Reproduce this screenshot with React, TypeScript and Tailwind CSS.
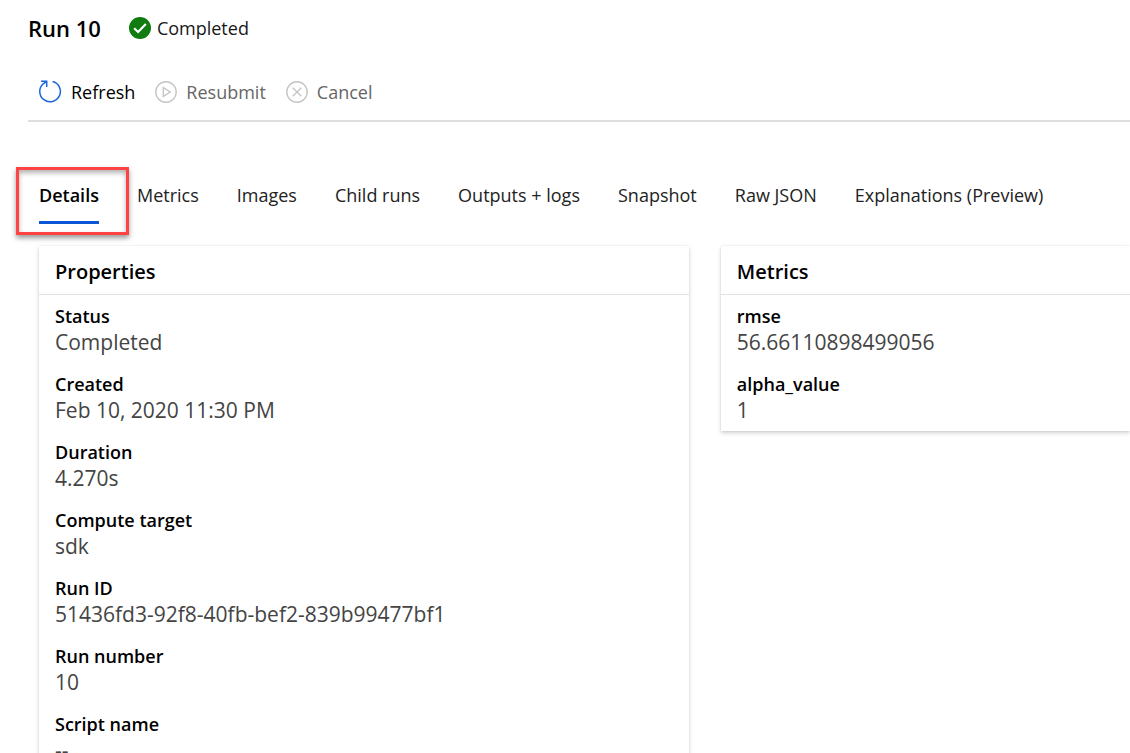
import { useState } from 'react';

const tabs = [
  'Details',
  'Metrics',
  'Images',
  'Child runs',
  'Outputs + logs',
  'Snapshot',
  'Raw JSON',
  'Explanations (Preview)',
];

const properties = [
  { label: 'Status', value: 'Completed' },
  { label: 'Created', value: 'Feb 10, 2020 11:30 PM' },
  { label: 'Duration', value: '4.270s' },
  { label: 'Compute target', value: 'sdk' },
  { label: 'Run ID', value: '51436fd3-92f8-40fb-bef2-839b99477bf1' },
  { label: 'Run number', value: '10' },
  { label: 'Script name', value: '--' },
];

const metrics = [
  { label: 'rmse', value: '56.66110898499056' },
  { label: 'alpha_value', value: '1' },
];

function CompletedIcon() {
  return (
    <svg className="size-[22px] shrink-0" viewBox="0 0 22 22" aria-hidden="true">
      <circle cx="11" cy="11" r="11" fill="#107c10" />
      <path d="M5.2 11.2 9.1 15 16.8 7" fill="none" stroke="#fff" strokeWidth="2.2" />
    </svg>
  );
}

function RefreshIcon() {
  return (
    <svg className="size-6 shrink-0" viewBox="0 0 24 24" fill="none" stroke="#1a66e0" strokeWidth="1.5" aria-hidden="true">
      <path d="M14.6 1.5A10.3 10.3 0 1 1 5.2 3.8L8.7 1.3" />
      <path d="M3 1.3H8.7V7" />
    </svg>
  );
}

function ResubmitIcon() {
  return (
    <svg className="size-[22px] shrink-0" viewBox="0 0 22 22" fill="none" stroke="#c8c6c4" strokeWidth="1.4" aria-hidden="true">
      <circle cx="11" cy="11" r="10.2" />
      <path d="M8.3 6.6V15.4L15.2 11Z" />
    </svg>
  );
}

function CancelIcon() {
  return (
    <svg className="size-[22px] shrink-0" viewBox="0 0 22 22" fill="none" stroke="#c8c6c4" strokeWidth="1.4" aria-hidden="true">
      <circle cx="11" cy="11" r="10.2" />
      <path d="M6.7 6.7 15.3 15.3M15.3 6.7 6.7 15.3" />
    </svg>
  );
}

function Card({ title, items }: { title: string; items: { label: string; value: string }[] }) {
  return (
    <section className="bg-white shadow-[0_2px_4px_rgba(0,0,0,0.18),0_0_2px_rgba(0,0,0,0.08)]">
      <h2 className="border-b border-[#e1e1e1] px-4 pt-[10px] pb-[6px] text-xl leading-8 font-semibold">{title}</h2>
      <dl className="flex flex-col gap-4 px-4 pt-2 pb-2">
        {items.map((item) => (
          <div key={item.label}>
            <dt className="text-lg leading-[26px] font-semibold">{item.label}</dt>
            <dd className="text-[21px] leading-[26px] text-[#444]">{item.value}</dd>
          </div>
        ))}
      </dl>
    </section>
  );
}

export default function App() {
  const [active, setActive] = useState('Details');

  return (
    <main className="h-screen overflow-hidden bg-white font-['Open_Sans','Noto_Sans',sans-serif] text-black">
      <header className="ml-7 border-b-2 border-[#dedede] pt-3">
        <div className="flex items-center gap-7">
          <h1 className="text-[22px] leading-8 font-semibold">Run 10</h1>
          <p className="flex items-center gap-[6px] text-lg leading-8 text-[#171717]">
            <CompletedIcon />
            Completed
          </p>
        </div>
        <div className="flex gap-5 pt-8 pb-3 pl-[10px] text-lg leading-8">
          <button type="button" className="flex items-center gap-[9px]">
            <RefreshIcon />
            Refresh
          </button>
          <button type="button" disabled className="flex items-center gap-[9px] text-[#666]">
            <ResubmitIcon />
            Resubmit
          </button>
          <button type="button" disabled className="flex items-center gap-[9px] text-[#666]">
            <CancelIcon />
            Cancel
          </button>
        </div>
      </header>

      <div role="tablist" className="mt-[57px] flex gap-[38px] pl-[39px] text-lg leading-8 whitespace-nowrap text-[#222]">
        {tabs.map((tab) => (
          <button
            key={tab}
            type="button"
            role="tab"
            aria-selected={tab === active}
            onClick={() => setActive(tab)}
            className={
              tab === active
                ? 'relative border-b-3 border-[#0b55d9] pb-[10px] font-semibold text-black'
                : 'relative border-b-3 border-transparent pb-[10px]'
            }
          >
            {tab}
            {tab === 'Details' && (
              <span className="pointer-events-none absolute -top-3 -right-[30px] -bottom-[14px] -left-[23px] border-3 border-[#ff4343] shadow-[0_3px_5px_rgba(0,0,0,0.4),inset_0_3px_5px_rgba(0,0,0,0.3)]" />
            )}
          </button>
        ))}
      </div>

      <div className="mt-[22px] grid grid-cols-[27fr_17fr] items-start gap-8 pl-[39px]">
        <Card title="Properties" items={properties} />
        <Card title="Metrics" items={metrics} />
      </div>
    </main>
  );
}
